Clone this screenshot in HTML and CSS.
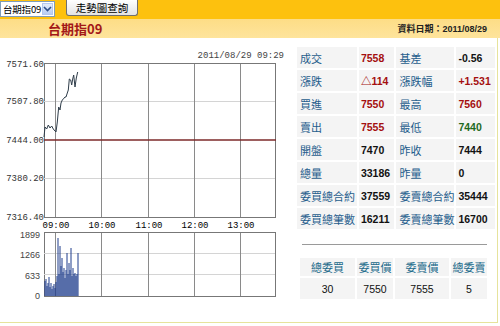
FILE: index.html
```html
<!DOCTYPE html>
<html lang="zh-TW">
<head>
    <meta charset="UTF-8">
    <title>台期指09 走勢圖</title>
    <link rel="stylesheet" href="styles.css">
</head>
<body>
    <div class="topbar">
        <div class="pick">
            <span class="pick-text">台期指09</span>
            <span class="pick-arrow">
                <svg width="9" height="6" viewBox="0 0 9 6"><path d="M1 1 L4.5 4.5 L8 1" fill="none" stroke="#2d4f8a" stroke-width="1.6"/></svg>
            </span>
        </div>
        <button class="go">走勢圖查詢</button>
    </div>

    <div class="titlebar">
        <span class="title">台期指09</span>
        <span class="date">資料日期：2011/08/29</span>
    </div>

    <div class="main">
        <svg class="chart" width="290" height="270" viewBox="0 38 290 270">
            <text class="stamp" x="284" y="58" text-anchor="end">2011/08/29 09:29</text>

            <!-- price -->
            <rect x="44.5" y="63.5" width="231" height="154" fill="#fff" stroke="#777"/>
            <g stroke="#d4d4d4">
                <line x1="44" y1="101.5" x2="275" y2="101.5"/>
                <line x1="44" y1="178.5" x2="275" y2="178.5"/>
            </g>
            <g stroke="#8a8a8a">
                <line x1="55.5" y1="64" x2="55.5" y2="217"/>
                <line x1="101.5" y1="64" x2="101.5" y2="217"/>
                <line x1="148.5" y1="64" x2="148.5" y2="217"/>
                <line x1="194.5" y1="64" x2="194.5" y2="217"/>
                <line x1="240.5" y1="64" x2="240.5" y2="217"/>
            </g>
            <line x1="44" y1="140" x2="276" y2="140" stroke="#7d2a2a" stroke-width="1.6"/>
            <polyline fill="none" stroke="#2f3d4a" stroke-width="1"
                points="44,137 45,127 46.7,129 48.3,125 50,128 51.7,126 53.3,129 55,131 56,132 57.3,122 58.7,107 60,110 61,103 62.3,100 63.3,99 65,97 66,97 67.3,93 68.3,90 69.3,79 70.7,80 71.7,85 72.7,79 73.7,75 75,87 76.3,78 77.7,72"/>
            <g class="axis" text-anchor="end">
                <text x="44" y="67">7571.60</text>
                <text x="44" y="104">7507.80</text>
                <text x="44" y="143">7444.00</text>
                <text x="44" y="181">7380.20</text>
                <text x="44" y="220">7316.40</text>
            </g>
            <g class="axis time" text-anchor="middle">
                <text x="56" y="228">09:00</text>
                <text x="102" y="228">10:00</text>
                <text x="149" y="228">11:00</text>
                <text x="195" y="228">12:00</text>
                <text x="241" y="228">13:00</text>
            </g>

            <!-- volume -->
            <rect x="44.5" y="232.5" width="231" height="64" fill="#fff" stroke="#777"/>
            <g stroke="#d4d4d4">
                <line x1="44" y1="253.5" x2="275" y2="253.5"/>
                <line x1="44" y1="274.5" x2="275" y2="274.5"/>
            </g>
            <g stroke="#8a8a8a">
                <line x1="55.5" y1="233" x2="55.5" y2="296"/>
                <line x1="101.5" y1="233" x2="101.5" y2="296"/>
                <line x1="148.5" y1="233" x2="148.5" y2="296"/>
                <line x1="194.5" y1="233" x2="194.5" y2="296"/>
                <line x1="240.5" y1="233" x2="240.5" y2="296"/>
            </g>
            <path stroke="#1f3c8c" stroke-width="1" fill="none"
                d="M45 296V281 M46 296V279 M47 296V286 M48 296V283 M49 296V277 M50 296V287 M51 296V283 M52 296V289 M53 296V286 M54 296V284 M55 296V288 M56 296V282 M57 296V276 M58 296V238 M59 296V274 M60 296V246 M61 296V266 M62 296V258 M63 296V272 M64 296V268 M65 296V278 M66 296V270 M67 296V253 M68 296V274 M69 296V263 M70 296V270 M71 296V248 M72 296V276 M73 296V268 M74 296V274 M75 296V273 M76 296V276 M77 296V274 M78 296V253"/>
            <g class="axis vol" text-anchor="end">
                <text x="40" y="238">1899</text>
                <text x="40" y="258">1266</text>
                <text x="40" y="279">633</text>
                <text x="40" y="299">0</text>
            </g>
        </svg>

        <div class="quote">
            <table class="board">
                <tr><td class="lbl">成交</td><td class="val up">7558</td><td class="lbl">基差</td><td class="val">-0.56</td></tr>
                <tr><td class="lbl">漲跌</td><td class="val up">△114</td><td class="lbl">漲跌幅</td><td class="val up">+1.531</td></tr>
                <tr><td class="lbl">買進</td><td class="val up">7550</td><td class="lbl">最高</td><td class="val up">7560</td></tr>
                <tr><td class="lbl">賣出</td><td class="val up">7555</td><td class="lbl">最低</td><td class="val down">7440</td></tr>
                <tr><td class="lbl">開盤</td><td class="val">7470</td><td class="lbl">昨收</td><td class="val">7444</td></tr>
                <tr><td class="lbl">總量</td><td class="val">33186</td><td class="lbl">昨量</td><td class="val">0</td></tr>
                <tr><td class="lbl">委買總合約</td><td class="val">37559</td><td class="lbl">委賣總合約</td><td class="val">35444</td></tr>
                <tr><td class="lbl">委買總筆數</td><td class="val">16211</td><td class="lbl">委賣總筆數</td><td class="val">16700</td></tr>
            </table>
            <div class="rule"></div>
            <table class="book">
                <tr class="head"><td>總委買</td><td>委買價</td><td>委賣價</td><td>總委賣</td></tr>
                <tr class="nums"><td>30</td><td>7550</td><td>7555</td><td>5</td></tr>
            </table>
        </div>
    </div>
</body>
</html>
```

FILE: styles.css
```css
body {
    margin: 0;
    font-family: "Liberation Sans", "Noto Sans CJK TC", sans-serif;
    background: #fff;
    width: 500px;
}
.topbar {
    height: 19px;
    background: #fdc10e;
    display: flex;
    align-items: flex-start;
}
.pick {
    margin-top: 1px;
    width: 53px;
    height: 14px;
    border: 1px solid #7f9db9;
    background: #fff;
    display: flex;
    align-items: center;
    justify-content: space-between;
    overflow: hidden;
}
.pick-text {
    font-family: "Noto Sans CJK TC", sans-serif;
    font-size: 9.5px;
    line-height: 12px;
    padding-left: 2px;
    white-space: nowrap;
    letter-spacing: -0.2px;
    color: #000;
}
.pick-arrow {
    flex: none;
    width: 11px;
    height: 12px;
    margin-right: 1px;
    background: linear-gradient(#e3ecfb, #b9cdf2);
    border: 1px solid #b4c8ee;
    box-sizing: border-box;
    display: flex;
    align-items: center;
    justify-content: center;
}
.go {
    margin-left: 11px;
    width: 72px;
    height: 16px;
    padding: 0;
    border: 1px solid #707070;
    border-top: none;
    border-radius: 0 0 3px 3px;
    background: linear-gradient(#ffffff, #e4e4e4);
    font-family: "Noto Sans CJK TC", sans-serif;
    font-size: 10.5px;
    line-height: 14px;
    color: #000;
}
.titlebar {
    height: 19px;
    background: linear-gradient(#fddd86, #fee49c);
    display: flex;
    align-items: center;
    justify-content: space-between;
}
.title {
    padding-left: 48px;
    font-family: "Noto Sans CJK TC", sans-serif;
    font-size: 13px;
    font-weight: bold;
    color: #a31818;
}
.date {
    padding-right: 13px;
    font-size: 9px;
    font-weight: bold;
    color: #222;
}
.main {
    width: 497px;
    height: 284px;
    border-right: 1px solid #e6e39c;
    border-bottom: 1px solid #e6e39c;
    display: flex;
}
.chart {
    display: block;
    flex: none;
}
.stamp {
    font-family: "Liberation Mono", monospace;
    font-size: 9px;
    fill: #444;
}
.axis {
    font-family: "Liberation Mono", monospace;
    font-size: 9px;
    fill: #333;
}
.time {
    fill: #000;
}
.vol {
    font-family: "Liberation Sans", sans-serif;
    fill: #444;
}
.quote {
    margin-left: 5px;
    padding-top: 7px;
}
.board {
    border-collapse: separate;
    border-spacing: 2px;
}
.board td {
    height: 21px;
    padding: 0;
    background: #f4f4f4;
    white-space: nowrap;
}
.board td:nth-child(1) { width: 58px; }
.board td:nth-child(2) { width: 36px; }
.board td:nth-child(3) { width: 55px; }
.board td:nth-child(4) { width: 39px; }
.lbl {
    padding-left: 3px !important;
    font-family: "Noto Sans CJK TC", sans-serif;
    font-size: 11px;
    color: #1f5d8c;
}
.val {
    padding-left: 2px !important;
    font-size: 10.5px;
    font-weight: bold;
    color: #111;
}
.val.up { color: #a40f0f; }
.val.down { color: #1e6a1e; }
.rule {
    margin: 13px 0 0 7px;
    width: 185px;
    height: 1px;
    background: #9a9a9a;
}
.book {
    margin: 11px 0 0 3px;
    border-collapse: separate;
    border-spacing: 2px;
}
.book td {
    padding: 0;
    text-align: center;
    background: #f4f4f4;
}
.book td:nth-child(1) { width: 55px; }
.book td:nth-child(2) { width: 36px; }
.book td:nth-child(3) { width: 54px; }
.book td:nth-child(4) { width: 36px; }
.head td {
    height: 18px;
    font-family: "Noto Sans CJK TC", sans-serif;
    font-size: 11px;
    color: #1b6a8a;
}
.nums td {
    height: 21px;
    font-size: 10.5px;
    color: #111;
}
```
